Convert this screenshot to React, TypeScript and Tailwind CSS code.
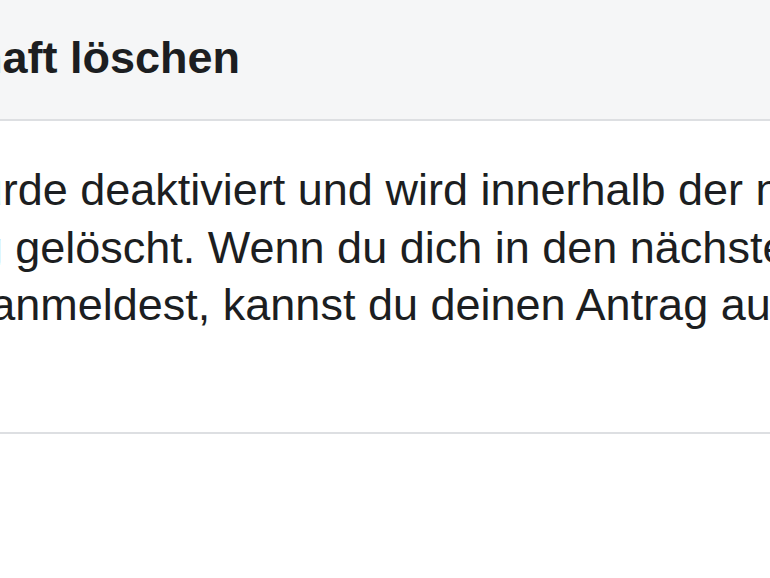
export default function App() {
  return (
    <div className="w-[770px] h-[578px] overflow-hidden bg-white font-['Liberation_Sans',Arial,sans-serif] text-[#1c1e21]">
      <div className="w-[1500px] -ml-[290px]">
        <div className="h-[121px] bg-[#f5f6f7] border-b-2 border-[#dddfe2] flex items-center">
          <h1 className="text-[45px] font-bold leading-none pb-[4px]">Konto dauerhaft löschen</h1>
        </div>
        <div className="pt-[40px] pb-[98px] border-b-2 border-[#dddfe2]">
          <p className="text-[45px] leading-[57.5px] whitespace-nowrap">
            Dein Konto wurde deaktiviert und wird innerhalb der nächsten 30
            <br />
            Tage endgültig gelöscht. Wenn du dich in den nächsten 30
            <br />
            Tagen wieder anmeldest, kannst du deinen Antrag auf Löschung zurückziehen.
          </p>
        </div>
      </div>
    </div>
  )
}
